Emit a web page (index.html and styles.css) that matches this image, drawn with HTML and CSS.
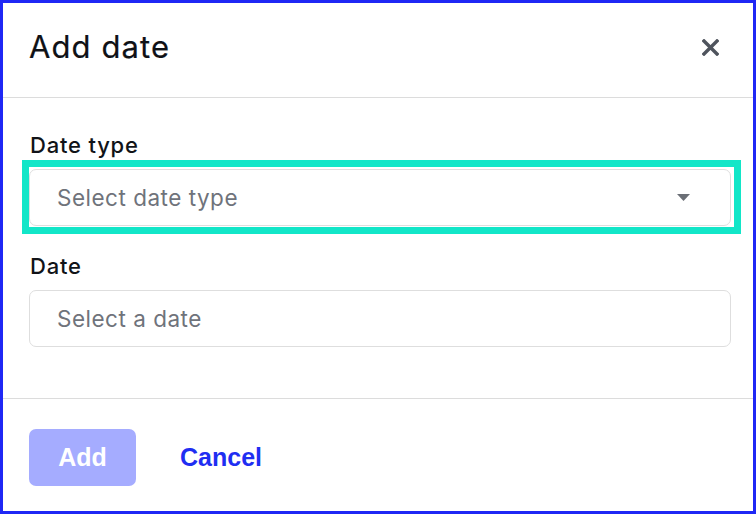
FILE: index.html
```html
<!DOCTYPE html>
<html lang="en">
<head>
<meta charset="utf-8">
<title>Add date</title>
<link rel="stylesheet" href="styles.css">
</head>
<body>
<div class="dialog">
  <header class="dialog-header">
    <h1 class="dialog-title">Add date</h1>
    <button class="close-btn" aria-label="Close">
      <svg width="17" height="17" viewBox="0 0 17 17"><path d="M2 2 L15 15 M15 2 L2 15" stroke="#4f545d" stroke-width="3.4" stroke-linecap="square"/></svg>
    </button>
  </header>
  <section class="dialog-body">
    <label class="field-label">Date type</label>
    <div class="focus-ring">
      <div class="input select">
        <span class="placeholder">Select date type</span>
        <svg class="caret" width="13" height="7" viewBox="0 0 13 7"><path d="M0 0 H13 L6.5 7 Z" fill="#6b6f76"/></svg>
      </div>
    </div>
    <label class="field-label second">Date</label>
    <div class="input">
      <span class="placeholder">Select a date</span>
    </div>
  </section>
  <footer class="dialog-footer">
    <button class="btn-primary">Add</button>
    <button class="btn-link">Cancel</button>
  </footer>
</div>
</body>
</html>
```
FILE: styles.css
```css
* { box-sizing: border-box; }
html, body { margin: 0; padding: 0; }
body { width: 756px; height: 514px; background: #fff; font-family: Inter, "Noto Sans", sans-serif; }
.dialog {
  width: 756px;
  height: 514px;
  border: 3px solid #1f28f5;
  display: flex;
  flex-direction: column;
}
.dialog-header {
  height: 95px;
  border-bottom: 1px solid #dcdcdc;
  display: flex;
  align-items: flex-start;
  justify-content: space-between;
  padding: 26px 34px 0 26px;
}
.dialog-title {
  margin: 0;
  font-size: 31px;
  font-weight: 400;
  letter-spacing: 1.1px;
  color: #0f1116;
  line-height: 36px;
  -webkit-text-stroke: 0.2px #0f1116;
}
.close-btn {
  border: 0;
  background: none;
  padding: 0;
  margin-top: 10px;
  width: 17px;
  height: 17px;
  display: flex;
}
.dialog-body {
  padding: 35px 22px 0 26px;
  height: 301px;
  border-bottom: 1px solid #dcdcdc;
  display: flex;
  flex-direction: column;
}
.field-label {
  font-size: 22px;
  font-weight: 500;
  letter-spacing: 0.8px;
  color: #111318;
  line-height: 24px;
  padding-left: 1px;
  margin-bottom: 12px;
}
.field-label.second { margin-top: 28px; }
.focus-ring {
  border: 7px solid #12e6c8;
  padding: 2px 3px 1px 0;
  margin: -9px -10px -8px -7px;
}
.input {
  height: 57px;
  border: 1px solid #dedede;
  border-radius: 7px;
  display: flex;
  align-items: center;
  justify-content: space-between;
  padding: 0 40px 0 27px;
  background: #fff;
}
.placeholder {
  font-size: 22.5px;
  letter-spacing: 0.5px;
  color: #6f737b;
}
.caret { display: block; }
.dialog-footer {
  flex: 1;
  display: flex;
  align-items: flex-start;
  padding: 30px 0 0 26px;
  gap: 44px;
}
.btn-primary {
  width: 107px;
  height: 57px;
  border: 0;
  border-radius: 7px;
  background: #a5acff;
  color: #fff;
  font-family: "Liberation Sans", Arial, sans-serif;
  font-weight: 700;
  font-size: 25px;
  padding: 0;
}
.btn-link {
  border: 0;
  background: none;
  height: 57px;
  padding: 0;
  color: #1f2ef2;
  font-family: "Liberation Sans", Arial, sans-serif;
  font-weight: 700;
  font-size: 25px;
}
```
